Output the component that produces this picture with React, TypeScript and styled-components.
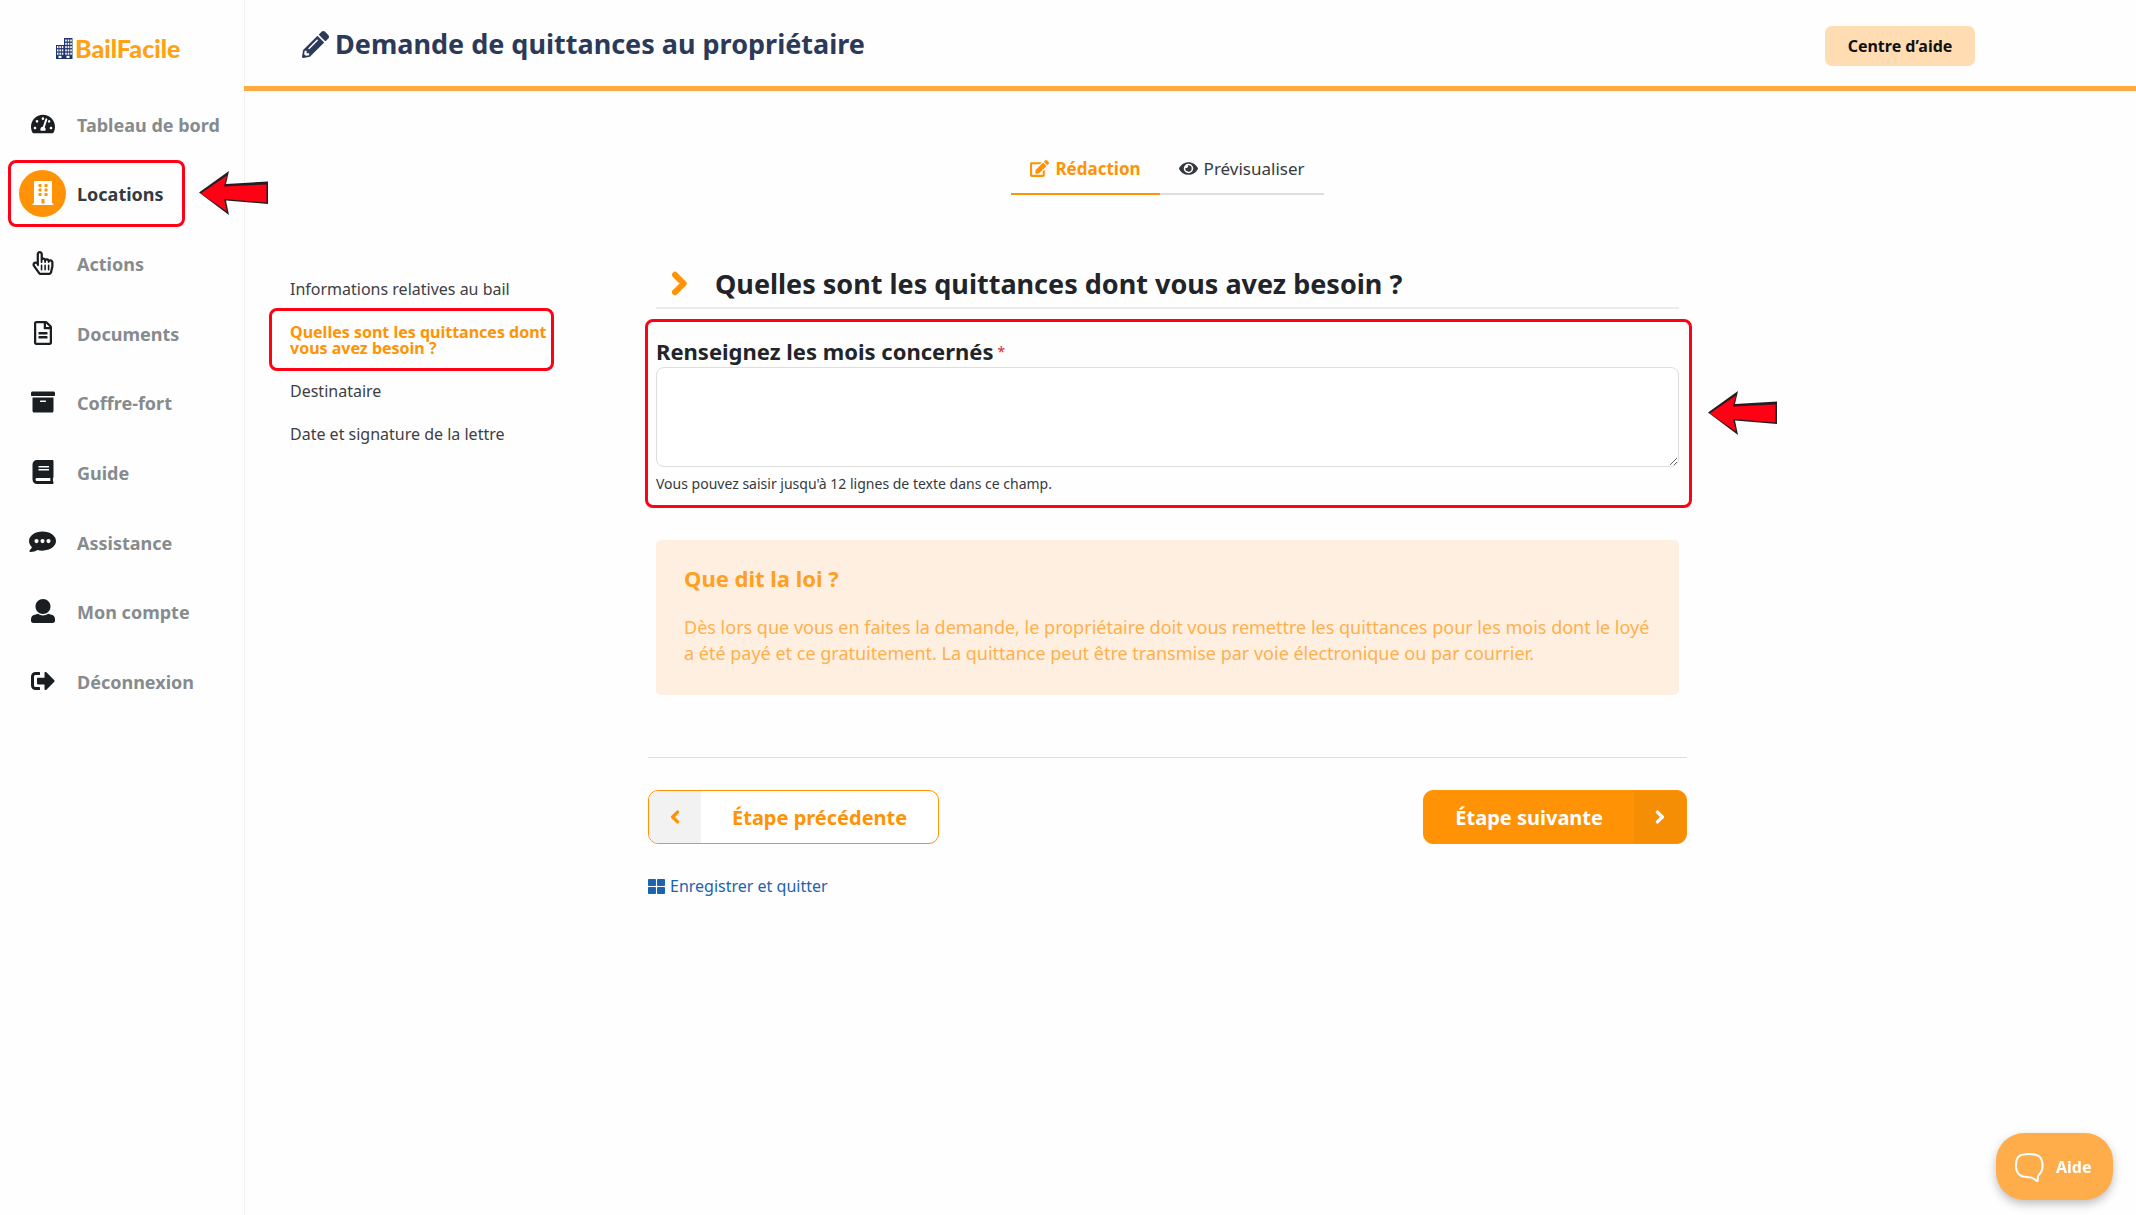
import React from 'react';
import styled, { createGlobalStyle, css } from 'styled-components';
import {
  FaArchive,
  FaBook,
  FaBuilding,
  FaEdit,
  FaEye,
  FaPencilAlt,
  FaRegFileAlt,
  FaRegHandPointer,
  FaSignOutAlt,
  FaTachometerAlt,
  FaThLarge,
} from 'react-icons/fa';

const orange = '#ff9305';
const red = '#ff0014';

const GlobalStyle = createGlobalStyle`
  *, *::before, *::after { box-sizing: border-box; }
  body {
    margin: 0;
    background: #fefefe;
    color: #212529;
    font-family: "Noto Sans", "Open Sans", sans-serif;
    font-size: 16px;
  }
  h1, h2, h3, p, ul { margin: 0; padding: 0; }
  ul { list-style: none; }
  a { color: inherit; text-decoration: none; }
  button, textarea { font-family: inherit; }
`;

const Page = styled.div`
  display: grid;
  grid-template-columns: 244px minmax(0, 1fr);
  min-height: 100vh;
`;

const Sidebar = styled.nav`
  display: flex;
  flex-direction: column;
  box-shadow: 1px 0 0 #f3f3f3;
`;

const Logo = styled.a`
  display: flex;
  align-items: center;
  gap: 2px;
  height: 90px;
  padding: 6px 0 0 56px;
  color: #ffa114;
  font-family: Lato, sans-serif;
  font-size: 25px;
  font-weight: 900;
  line-height: 28px;
`;

const Menu = styled.ul`
  display: grid;
  grid-auto-rows: 1fr;
  height: 627px;
`;

const MenuItem = styled.li`
  position: relative;
`;

const MenuLink = styled.a<{ $active?: boolean }>`
  display: flex;
  align-items: center;
  gap: 11px;
  height: 100%;
  padding-left: 19px;
  color: ${(p) => (p.$active ? '#343a40' : '#868b8e')};
  font-size: 18px;
  font-weight: 700;
`;

const MenuIcon = styled.span<{ $active?: boolean }>`
  display: flex;
  align-items: center;
  justify-content: center;
  width: 47px;
  height: 47px;
  margin-bottom: 2px;
  border-radius: 50%;
  color: ${(p) => (p.$active ? '#fff' : '#1b1e21')};
  background: ${(p) => (p.$active ? orange : 'transparent')};
  svg { flex: none; width: auto; height: 24px; }
`;

const Main = styled.div`
  display: flex;
  flex-direction: column;
`;

const Header = styled.header`
  display: flex;
  align-items: center;
  justify-content: space-between;
  height: 91px;
  padding: 2px 161px 0 58px;
  border-bottom: 5px solid #ffaa3f;
`;

const Title = styled.h1`
  display: flex;
  align-items: center;
  gap: 6px;
  color: #2c3a5a;
  font-size: 27px;
  font-weight: 700;
  line-height: 40px;
`;

const HelpCenter = styled.button`
  width: 150px;
  height: 40px;
  margin-top: 4px;
  border: 0;
  border-radius: 7px;
  background: #ffdcb2;
  color: #111;
  font-size: 16px;
  font-weight: 700;
`;

const Content = styled.div`
  display: flex;
  flex-direction: column;
  padding: 56px 45px 0 0;
`;

const Tabs = styled.div`
  display: flex;
  align-self: center;
`;

const Tab = styled.button<{ $active?: boolean }>`
  display: flex;
  align-items: center;
  gap: 6px;
  height: 48px;
  padding: 0 19px 3px;
  border: 0;
  border-bottom: 2px solid ${(p) => (p.$active ? orange : '#dddddd')};
  background: none;
  color: ${(p) => (p.$active ? orange : '#343a40')};
  font-size: 17px;
  font-weight: ${(p) => (p.$active ? 700 : 400)};
`;

const Columns = styled.div`
  display: grid;
  grid-template-columns: 1fr minmax(0, 1039px) 1fr;
  padding-top: 65px;
`;

const Steps = styled.ul`
  display: flex;
  flex-direction: column;
  gap: 27px;
  padding: 21px 98px 0 46px;
`;

const Step = styled.li<{ $active?: boolean }>`
  position: relative;
  color: ${(p) => (p.$active ? orange : '#3d4043')};
  font-size: 16px;
  font-weight: ${(p) => (p.$active ? 700 : 400)};
  line-height: 16px;
`;

const Form = styled.form`
  display: flex;
  flex-direction: column;
`;

const FormBody = styled.div`
  display: flex;
  flex-direction: column;
  padding: 0 8px;
`;

const Question = styled.h2`
  display: flex;
  align-items: center;
  gap: 27px;
  height: 49px;
  padding-left: 15px;
  border-bottom: 2px solid #ebebeb;
  font-size: 27px;
  font-weight: 700;
  svg { color: ${orange}; }
`;

const Field = styled.div`
  position: relative;
  display: flex;
  flex-direction: column;
  padding-top: 27px;
`;

const Label = styled.label`
  display: flex;
  gap: 4px;
  font-size: 22px;
  font-weight: 700;
  line-height: 31px;
`;

const Required = styled.span`
  color: #e0262f;
  font-size: 14px;
  font-weight: 400;
`;

const TextArea = styled.textarea`
  height: 100px;
  padding: 8px 12px;
  border: 1px solid #dddddd;
  border-radius: 8px;
  background: #fff;
  font-size: 18px;
  resize: vertical;
`;

const Hint = styled.small`
  padding-top: 7px;
  color: #343a40;
  font-size: 14px;
  line-height: 20px;
`;

const Law = styled.section`
  display: flex;
  flex-direction: column;
  gap: 22px;
  margin-top: 46px;
  padding: 24px 28px 29px;
  border-radius: 5px;
  background: #ffefe0;
  color: #ffb04c;
`;

const LawTitle = styled.h3`
  color: #ffa022;
  font-size: 22px;
  font-weight: 700;
  line-height: 28px;
`;

const LawText = styled.p`
  font-size: 18px;
  line-height: 26px;
`;

const Actions = styled.div`
  display: flex;
  justify-content: space-between;
  margin-top: 62px;
  padding-top: 32px;
  border-top: 1px solid #dedede;
`;

const StepButton = styled.button<{ $primary?: boolean }>`
  display: flex;
  align-items: stretch;
  height: 54px;
  padding: 0;
  overflow: hidden;
  border: 1px solid ${orange};
  border-radius: 10px;
  background: ${(p) => (p.$primary ? orange : '#fff')};
  color: ${(p) => (p.$primary ? '#fff' : orange)};
  font-size: 20px;
  font-weight: 700;
`;

const ButtonText = styled.span`
  align-self: center;
  padding: 0 31px;
`;

const ButtonIcon = styled.span<{ $primary?: boolean }>`
  display: flex;
  align-items: center;
  justify-content: center;
  width: 52px;
  background: ${(p) => (p.$primary ? '#f58d05' : '#f2f2f2')};
`;

const SaveLink = styled.a`
  display: flex;
  align-items: center;
  align-self: flex-start;
  gap: 5px;
  margin-top: 30px;
  color: #1c62ad;
  font-size: 16px;
  line-height: 24px;
`;

const HelpWidget = styled.button`
  position: fixed;
  right: 23px;
  bottom: 15px;
  display: flex;
  align-items: center;
  gap: 12px;
  width: 117px;
  height: 67px;
  padding: 0 0 0 18px;
  border: 0;
  border-radius: 28px;
  background: #ffad4b;
  box-shadow: 0 4px 10px rgba(0, 0, 0, 0.25);
  color: #fff;
  font-size: 16px;
  font-weight: 700;
`;

const highlightArea = {
  menu: css`left: 8px; top: 0; width: 177px; height: 67px;`,
  step: css`left: -21px; top: -16px; width: 285px; height: 63px;`,
  field: css`left: -11px; right: -13px; top: 10px; bottom: -14px;`,
};

const Highlight = styled.span<{ $on: keyof typeof highlightArea }>`
  position: absolute;
  border: 3px solid ${red};
  border-radius: 8px;
  pointer-events: none;
  ${(p) => highlightArea[p.$on]}
`;

const pointerPlace = {
  menu: css`left: 199px; top: 11px;`,
  field: css`left: calc(100% + 29px); top: 82px;`,
};

const Pointer = styled.svg<{ $on: keyof typeof pointerPlace }>`
  position: absolute;
  pointer-events: none;
  ${(p) => pointerPlace[p.$on]}
`;

const RedArrow = ({ on }: { on: keyof typeof pointerPlace }) => (
  <Pointer $on={on} width="70" height="45" viewBox="0 0 70 45" aria-hidden="true">
    <path d="M0 21.5 30 0 27 13 69 10.500V33L27 29.500 30 44Z" fill="#231f20" />
    <path d="M1.800 22.500 28 4.500 25 15.500 67.500 13.500V31.500L25 28 28 40.500Z" fill={red} />
  </Pointer>
);

const LogoMark = () => (
  <svg width="17" height="21" viewBox="0 0 17 21" aria-hidden="true">
    <path d="M0 7H8V0H16.500V21H0Z" fill="#20356b" />
    <g fill="#fff">
      {[1.5, 4.8, 8.1, 11.4, 14.7].map((y) =>
        [9.2, 11.7, 14.2].map((x) => <rect key={`${x}-${y}`} x={x} y={y} width="1.600" height="2" />),
      )}
      {[8.1, 11.4, 14.7].map((y) =>
        [1, 3.4, 5.8].map((x) => <rect key={`${x}-${y}`} x={x} y={y} width="1.500" height="2" />),
      )}
      <rect x="2.500" y="17.800" width="3" height="2.200" />
      <rect x="10.500" y="17.800" width="3" height="2.200" />
    </g>
  </svg>
);

const Chevron = ({ height, left }: { height: number; left?: boolean }) => (
  <svg
    width={Math.round(height * 0.68)}
    height={height}
    viewBox="0 0 17 25"
    fill="none"
    stroke="currentColor"
    strokeWidth="6"
    strokeLinecap="round"
    strokeLinejoin="round"
    aria-hidden="true"
  >
    <path d={left ? 'M13 3.800 4.300 12.500 13 21.200' : 'M4 3.800 12.700 12.500 4 21.200'} />
  </svg>
);

const CommentIcon = () => (
  <svg viewBox="0 0 576 512" fill="currentColor" aria-hidden="true">
    <path
      fillRule="evenodd"
      d="M288 32C129 32 0 122 0 236c0 49 24 95 63 130-9 23-27 45-48 64-14 13-6 40 16 38 60-2 110-22 149-44 33 10 70 16 108 16 159 0 288-90 288-204S447 32 288 32ZM160 192a44 44 0 1 1 0 88 44 44 0 0 1 0-88Zm128 0a44 44 0 1 1 0 88 44 44 0 0 1 0-88Zm128 0a44 44 0 1 1 0 88 44 44 0 0 1 0-88Z"
    />
  </svg>
);

const UserIcon = () => (
  <svg viewBox="0 0 512 512" fill="currentColor" aria-hidden="true">
    <path d="M256 0c88.366 0 160 71.634 160 160s-71.634 160-160 160S96 248.366 96 160 167.634 0 256 0zm183.283 333.821l-71.313-17.828c-74.923 53.890-165.738 41.864-215.940 0l-71.313 17.828C29.981 344.505 0 382.903 0 426.955V464c0 26.510 21.490 48 48 48h416c26.510 0 48-21.490 48-48v-37.045c0-44.052-29.981-82.450-72.717-93.134z" />
  </svg>
);

const BubbleIcon = () => (
  <svg width="30" height="30" viewBox="0 0 30 30" fill="none" aria-hidden="true">
    <path
      d="M15 2C5 2 2 5 2 13.500S6 25 15 25.200c2 0 3 .2 4.300 1.300l3.400 2.500c.6.400 1 .1 1-.6l.1-3.200c0-1 .3-1.600 1-2.400C28.300 20 28.700 17 28.500 12.500 28 4.500 24 2 15 2Z"
      stroke="#fff"
      strokeWidth="2"
    />
  </svg>
);

const menu = [
  { label: 'Tableau de bord', icon: <FaTachometerAlt /> },
  { label: 'Locations', icon: <FaBuilding />, active: true },
  { label: 'Actions', icon: <FaRegHandPointer /> },
  { label: 'Documents', icon: <FaRegFileAlt /> },
  { label: 'Coffre-fort', icon: <FaArchive /> },
  { label: 'Guide', icon: <FaBook /> },
  { label: 'Assistance', icon: <CommentIcon /> },
  { label: 'Mon compte', icon: <UserIcon /> },
  { label: 'Déconnexion', icon: <FaSignOutAlt /> },
];

const steps = [
  { label: 'Informations relatives au bail' },
  { label: 'Quelles sont les quittances dont vous avez besoin ?', active: true },
  { label: 'Destinataire' },
  { label: 'Date et signature de la lettre' },
];

export default function App() {
  return (
    <>
      <GlobalStyle />
      <Page>
        <Sidebar>
          <Logo href="#">
            <LogoMark />
            BailFacile
          </Logo>
          <Menu>
            {menu.map(({ label, icon, active }) => (
              <MenuItem key={label}>
                <MenuLink href="#" $active={active}>
                  <MenuIcon $active={active}>{icon}</MenuIcon>
                  {label}
                </MenuLink>
                {active && <Highlight $on="menu" />}
                {active && <RedArrow on="menu" />}
              </MenuItem>
            ))}
          </Menu>
        </Sidebar>
        <Main>
          <Header>
            <Title>
              <FaPencilAlt />
              Demande de quittances au propriétaire
            </Title>
            <HelpCenter type="button">Centre d’aide</HelpCenter>
          </Header>
          <Content>
            <Tabs>
              <Tab type="button" $active>
                <FaEdit size={19} />
                Rédaction
              </Tab>
              <Tab type="button">
                <FaEye size={19} />
                Prévisualiser
              </Tab>
            </Tabs>
            <Columns>
              <Steps>
                {steps.map(({ label, active }) => (
                  <Step key={label} $active={active}>
                    <a href="#">{label}</a>
                    {active && <Highlight $on="step" />}
                  </Step>
                ))}
              </Steps>
              <Form>
                <FormBody>
                  <Question>
                    <Chevron height={25} />
                    Quelles sont les quittances dont vous avez besoin ?
                  </Question>
                  <Field>
                    <Label htmlFor="months">
                      Renseignez les mois concernés
                      <Required>*</Required>
                    </Label>
                    <TextArea id="months" />
                    <Hint>Vous pouvez saisir jusqu'à 12 lignes de texte dans ce champ.</Hint>
                    <Highlight $on="field" />
                    <RedArrow on="field" />
                  </Field>
                  <Law>
                    <LawTitle>Que dit la loi ?</LawTitle>
                    <LawText>
                      Dès lors que vous en faites la demande, le propriétaire doit vous remettre les quittances pour les
                      mois dont le loyé a été payé et ce gratuitement. La quittance peut être transmise par voie
                      électronique ou par courrier.
                    </LawText>
                  </Law>
                </FormBody>
                <Actions>
                  <StepButton type="button">
                    <ButtonIcon>
                      <Chevron height={14} left />
                    </ButtonIcon>
                    <ButtonText>Étape précédente</ButtonText>
                  </StepButton>
                  <StepButton type="button" $primary>
                    <ButtonText>Étape suivante</ButtonText>
                    <ButtonIcon $primary>
                      <Chevron height={14} />
                    </ButtonIcon>
                  </StepButton>
                </Actions>
                <SaveLink href="#">
                  <FaThLarge size={17} />
                  Enregistrer et quitter
                </SaveLink>
              </Form>
            </Columns>
          </Content>
        </Main>
      </Page>
      <HelpWidget type="button">
        <BubbleIcon />
        Aide
      </HelpWidget>
    </>
  );
}
